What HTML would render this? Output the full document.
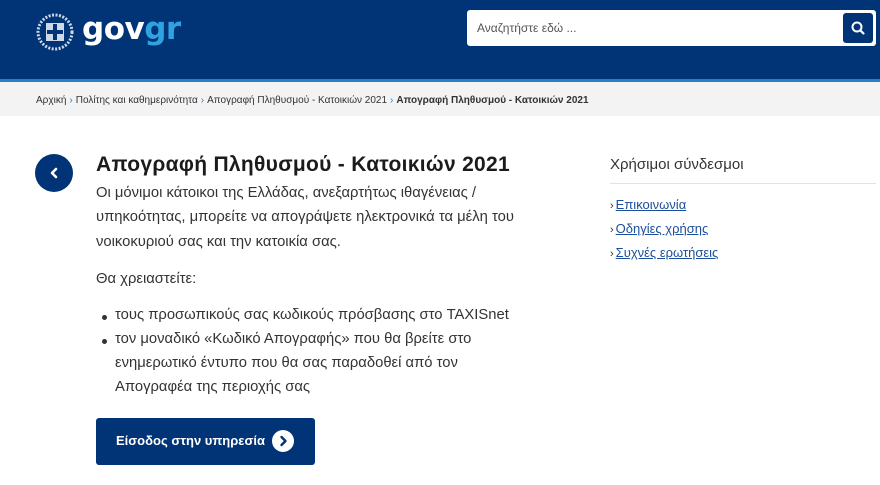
<!DOCTYPE html>
<html><head><meta charset="utf-8"><style>
*{margin:0;padding:0;box-sizing:border-box}
body{width:880px;height:485px;overflow:hidden;background:#fff;font-family:"Liberation Sans",sans-serif;color:#1b1b1b;position:relative}
.hdr{position:absolute;left:0;top:0;width:880px;height:79px;background:#003476}
.stripe{position:absolute;left:0;top:79px;width:880px;height:3px;background:#2980c4}
.bc{position:absolute;left:0;top:82px;width:880px;height:34px;background:#f3f3f3;font-size:10px;color:#333;padding:13px 0 0 36px;white-space:nowrap}
.bc i{color:#2a7dc2;font-style:normal;margin:0 3px}
.logo{position:absolute;left:82px;top:11px;font-size:31px;font-weight:bold;color:#fff;letter-spacing:-0.5px;font-family:"DejaVu Sans",sans-serif}
.logo span{color:#2ea3e0}
.search{position:absolute;left:467px;top:10px;width:409px;height:36px;background:#fff;border-radius:3px}
.search .ph{position:absolute;left:10px;top:11px;font-size:12px;color:#555}
.search .btn{position:absolute;right:3px;top:3px;width:30px;height:30px;background:#003476;border-radius:3px}
.back{position:absolute;left:35px;top:154px;width:38px;height:38px;border-radius:50%;background:#003476}
h1{position:absolute;left:96px;top:153px;font-size:21px;font-weight:bold;white-space:nowrap;letter-spacing:0.3px}
.p{position:absolute;left:96px;font-size:14.8px;color:#333;white-space:nowrap;letter-spacing:0}
.li::before{content:"";position:absolute;left:-13px;top:8px;width:5px;height:5px;border-radius:50%;background:#333}
.go{position:absolute;left:96px;top:418px;width:219px;height:47px;background:#003476;border-radius:3px;color:#fff;font-weight:bold;font-size:13px;padding:15px 0 0 20px}
.go .c{position:absolute;left:176px;top:12px;width:22px;height:22px;border-radius:50%;background:#fff}
.side{position:absolute;left:610px;top:156px;font-size:15px;color:#333}
.hr{position:absolute;left:610px;top:183px;width:266px;height:1px;background:#e2e2e2}
.lk{position:absolute;left:610px;font-size:13px;color:#1b4e9c;text-decoration:underline;white-space:nowrap}
.lk b{color:#333;font-weight:normal;text-decoration:none;display:inline-block;margin-right:2px;font-size:11px}
</style></head><body>
<div class="hdr"></div><div class="stripe"></div>
<svg style="position:absolute;left:36px;top:13px" width="38" height="38" viewBox="0 0 38 38"><circle cx="19" cy="19" r="17" fill="none" stroke="#cfd8e6" stroke-width="3" stroke-dasharray="2 1.5"/><rect x="10" y="10" width="18" height="18" fill="#cfd8e6"/><rect x="17" y="11" width="4" height="16" fill="#003476"/><rect x="11" y="17" width="16" height="4" fill="#003476"/></svg>
<div class="logo">gov<span>gr</span></div>
<div class="search"><div class="ph">Αναζητήστε εδώ ...</div><div class="btn"><svg width="30" height="30" viewBox="0 0 30 30"><circle cx="14" cy="14" r="4.5" fill="none" stroke="#fff" stroke-width="2"/><path d="M17.3 17.3L20.5 20.5" stroke="#fff" stroke-width="2.2" stroke-linecap="round"/></svg></div></div>
<div class="bc">Αρχική<i>›</i>Πολίτης και καθημερινότητα<i>›</i>Απογραφή Πληθυσμού - Κατοικιών 2021<i>›</i><b>Απογραφή Πληθυσμού - Κατοικιών 2021</b></div>
<div class="back"><svg width="38" height="38" viewBox="0 0 38 38"><path d="M21 15L17 19L21 23" fill="none" stroke="#fff" stroke-width="2.6" stroke-linecap="round" stroke-linejoin="round"/></svg></div>
<h1>Απογραφή Πληθυσμού - Κατοικιών 2021</h1>
<div class="p" style="top:185px">Οι μόνιμοι κάτοικοι της Ελλάδας, ανεξαρτήτως ιθαγένειας /</div>
<div class="p" style="top:209px">υπηκοότητας, μπορείτε να απογράψετε ηλεκτρονικά τα μέλη του</div>
<div class="p" style="top:234px">νοικοκυριού σας και την κατοικία σας.</div>
<div class="p" style="top:271px">Θα χρειαστείτε:</div>
<div class="p li" style="top:307px;left:115px">τους προσωπικούς σας κωδικούς πρόσβασης στο TAXISnet</div>
<div class="p li" style="top:331px;left:115px">τον μοναδικό «Κωδικό Απογραφής» που θα βρείτε στο</div>
<div class="p" style="top:355px;left:115px">ενημερωτικό έντυπο που θα σας παραδοθεί από τον</div>
<div class="p" style="top:379px;left:115px">Απογραφέα της περιοχής σας</div>
<div class="go">Είσοδος στην υπηρεσία<div class="c"><svg width="22" height="22" viewBox="0 0 22 22"><path d="M9.5 7L13.5 11L9.5 15" fill="none" stroke="#003476" stroke-width="2.4" stroke-linecap="round" stroke-linejoin="round"/></svg></div></div>
<div class="side">Χρήσιμοι σύνδεσμοι</div>
<div class="hr"></div>
<div class="lk" style="top:197px"><b>›</b>Επικοινωνία</div>
<div class="lk" style="top:221px"><b>›</b>Οδηγίες χρήσης</div>
<div class="lk" style="top:245px"><b>›</b>Συχνές ερωτήσεις</div>
</body></html>
